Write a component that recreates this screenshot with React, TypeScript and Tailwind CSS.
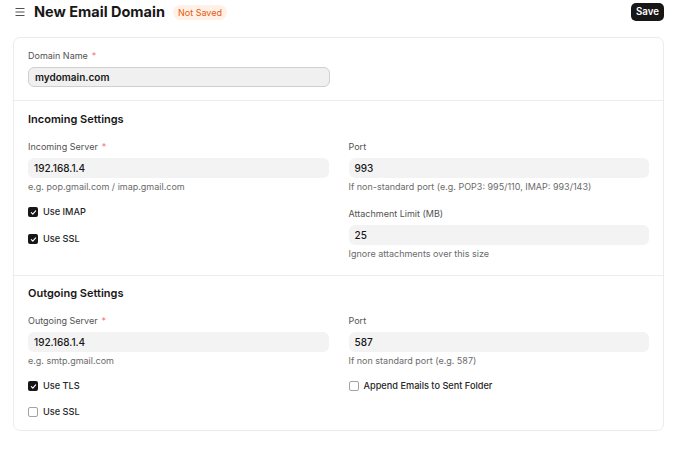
import React from 'react';

function Label({ text, required }: { text: string; required?: boolean }) {
  return (
    <div className="h-[14px] text-[9px] leading-[14px] text-[#525252]">
      {text}
      {required && <span className="ml-1 text-[#f87171]">*</span>}
    </div>
  );
}

function Input({ value }: { value: string }) {
  return (
    <div className="mt-1 h-[20px] rounded-[6px] bg-[#f3f3f3] px-[6px] text-[10px] font-medium leading-[20px] text-[#171717]">
      {value}
    </div>
  );
}

function Hint({ text }: { text: string }) {
  return <div className="mt-[2px] h-[14px] text-[9px] leading-[14px] text-[#6b6b6b]">{text}</div>;
}

function Check({ label, checked, className }: { label: string; checked?: boolean; className?: string }) {
  return (
    <div className={`flex h-[16px] items-center gap-[5px] ${className ?? ''}`}>
      {checked ? (
        <span className="flex h-[10px] w-[10px] items-center justify-center rounded-[2px] bg-[#171717]">
          <svg width="7" height="7" viewBox="0 0 8 8" fill="none">
            <path d="M1.5 4.2 3.2 5.8 6.5 2.2" stroke="white" strokeWidth="1.3" strokeLinecap="round" strokeLinejoin="round" />
          </svg>
        </span>
      ) : (
        <span className="h-[10px] w-[10px] rounded-[2px] border border-[#a3a3a3] bg-white" />
      )}
      <span className="text-[9.2px] font-medium text-[#262626]">{label}</span>
    </div>
  );
}

export default function App() {
  return (
    <div className="h-[463px] w-[690px] bg-white font-['Inter',sans-serif]">
      <div className="flex h-[24px] items-center pl-[15px] pr-[26px]">
        <svg width="10" height="10" viewBox="0 0 10 10" className="text-[#525252]">
          <path d="M0.5 1.5h9M0.5 5h9M0.5 8.5h9" stroke="currentColor" strokeWidth="1" />
        </svg>
        <h1 className="ml-[9px] text-[14.5px] font-bold text-[#171717]">New Email Domain</h1>
        <span className="ml-[8px] rounded-full bg-[#fff1e7] px-[5px] py-[2px] text-[9px] leading-[11px] text-[#e8590c]">
          Not Saved
        </span>
        <button className="ml-auto h-[18px] rounded-[5px] bg-[#171717] px-[5px] text-[9.7px] font-semibold text-white">
          Save
        </button>
      </div>

      <div className="ml-[13px] mt-[13px] w-[651px] rounded-[7px] border border-[#ececec]">
        <div className="border-b border-[#ececec] px-[14px] pb-[13px] pt-[11px]">
          <div className="w-[302px]">
            <Label text="Domain Name" required />
            <div className="mt-1 h-[20px] rounded-[6px] border border-[#cfcfcf] bg-[#f0f0f0] px-[6px] text-[10px] font-semibold leading-[18px] text-[#171717]">
              mydomain.com
            </div>
          </div>
        </div>

        <div className="border-b border-[#ececec] px-[14px] pb-[14px] pt-[10px]">
          <div className="h-[16px] text-[11px] font-semibold leading-[16px] text-[#171717]">Incoming Settings</div>
          <div className="mt-[13px] grid grid-cols-2 gap-x-[20px]">
            <div>
              <Label text="Incoming Server" required />
              <Input value="192.168.1.4" />
              <Hint text="e.g. pop.gmail.com / imap.gmail.com" />
              <Check className="mt-[10px]" label="Use IMAP" checked />
              <Check className="mt-[11px]" label="Use SSL" checked />
            </div>
            <div>
              <Label text="Port" />
              <Input value="993" />
              <Hint text="If non-standard port (e.g. POP3: 995/110, IMAP: 993/143)" />
              <div className="mt-[13px]">
                <Label text="Attachment Limit (MB)" />
              </div>
              <Input value="25" />
              <Hint text="Ignore attachments over this size" />
            </div>
          </div>
        </div>

        <div className="px-[14px] pb-[10px] pt-[9px]">
          <div className="h-[16px] text-[11px] font-semibold leading-[16px] text-[#171717]">Outgoing Settings</div>
          <div className="mt-[13px] grid grid-cols-2 gap-x-[20px]">
            <div>
              <Label text="Outgoing Server" required />
              <Input value="192.168.1.4" />
              <Hint text="e.g. smtp.gmail.com" />
              <Check className="mt-[10px]" label="Use TLS" checked />
              <Check className="mt-[10px]" label="Use SSL" />
            </div>
            <div>
              <Label text="Port" />
              <Input value="587" />
              <Hint text="If non standard port (e.g. 587)" />
              <Check className="mt-[10px]" label="Append Emails to Sent Folder" />
            </div>
          </div>
        </div>
      </div>
    </div>
  );
}
